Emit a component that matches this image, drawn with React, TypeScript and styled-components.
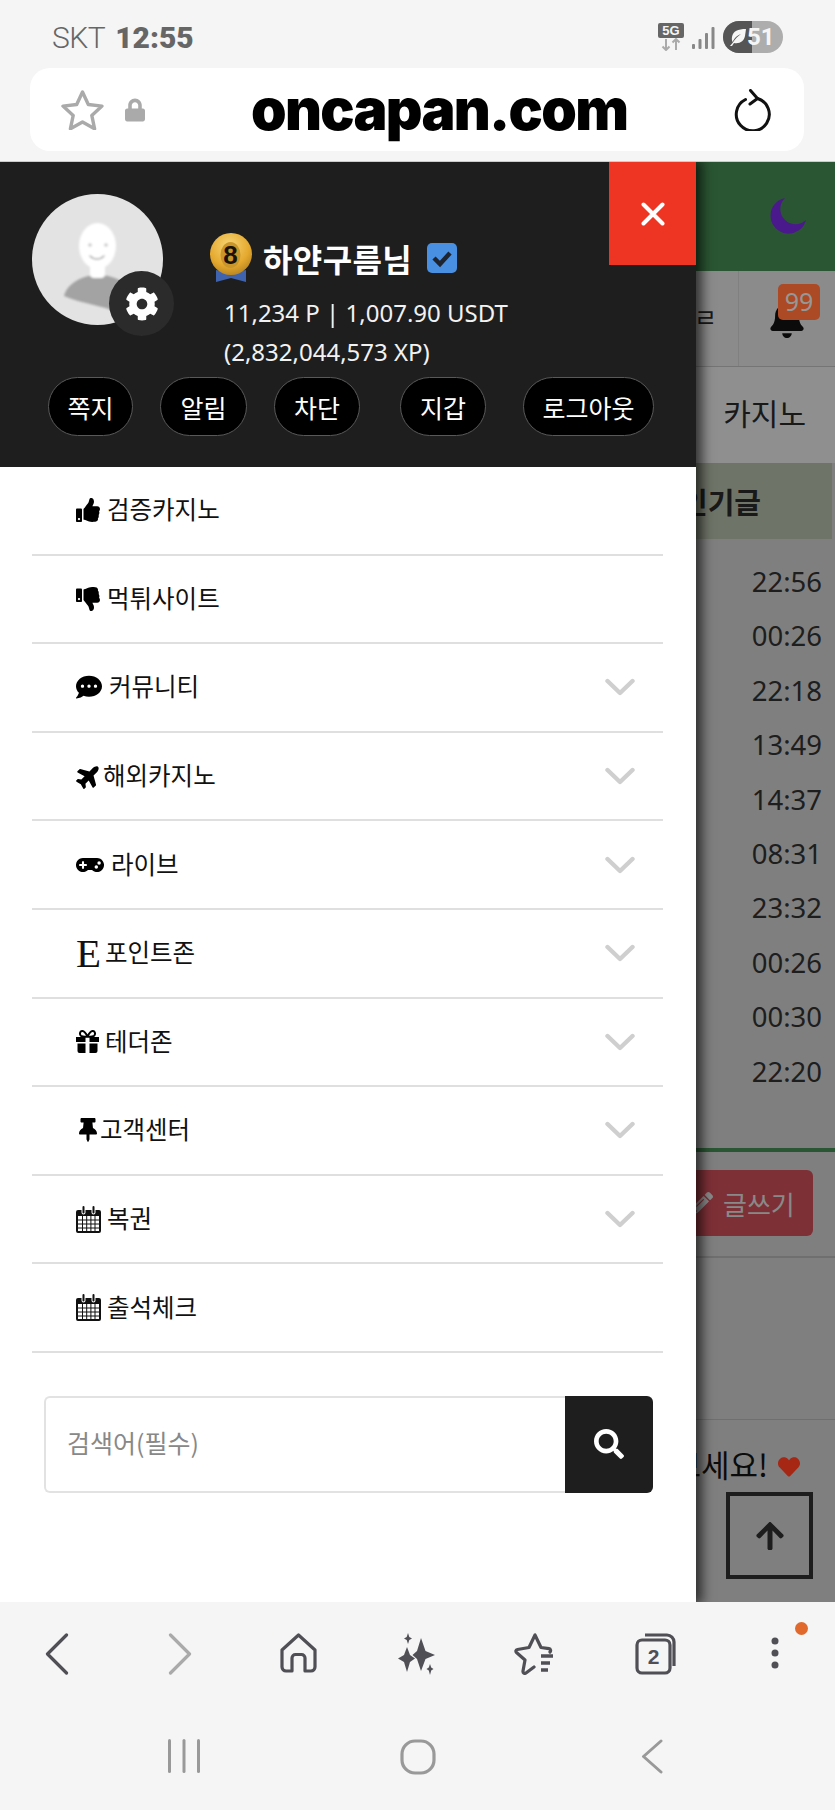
import React from 'react'
import styled, { createGlobalStyle } from 'styled-components'
import {
  FaThumbsUp,
  FaThumbsDown,
  FaCommentDots,
  FaPlane,
  FaGamepad,
  FaThumbtack,
  FaCog,
  FaSearch,
  FaBell,
  FaPencilAlt,
  FaArrowUp,
  FaHeart,
  FaLock,
} from 'react-icons/fa'

const KR = `"Noto Sans CJK KR", "Noto Sans", sans-serif`

const GlobalStyle = createGlobalStyle`
  html, body {
    margin: 0;
    padding: 0;
    background: #f5f5f5;
  }
  * {
    box-sizing: border-box;
  }
`

const Phone = styled.div`
  width: 835px;
  height: 1810px;
  display: flex;
  flex-direction: column;
  overflow: hidden;
  background: #f5f5f5;
  font-family: ${KR};
`

const StatusBar = styled.div`
  height: 68px;
  flex-shrink: 0;
  display: flex;
  align-items: flex-start;
  justify-content: space-between;
  padding: 21px 52px 0 52px;
`

const Clock = styled.div`
  font-family: Roboto, sans-serif;
  font-size: 30px;
  line-height: 34px;
  color: #666;
  font-weight: 300;
  letter-spacing: -0.5px;
  b {
    font-weight: 900;
    margin-left: 10px;
    letter-spacing: 0;
  }
`

const StatusIcons = styled.div`
  display: flex;
  align-items: flex-start;
`

const NetBadge = styled.div`
  width: 26px;
  display: flex;
  flex-direction: column;
  align-items: center;
  margin-top: 2px;
  span {
    width: 26px;
    height: 15px;
    background: #666;
    color: #f5f5f5;
    border-radius: 2px;
    font-family: "Liberation Sans", sans-serif;
    font-size: 13px;
    font-weight: 700;
    line-height: 15px;
    text-align: center;
  }
`

const SignalSlot = styled.div`
  margin: 6px 0 0 8px;
`

const Battery = styled.div`
  width: 60px;
  height: 32px;
  margin-left: 8px;
  border-radius: 16px;
  display: flex;
  overflow: hidden;
  background: #adadad;
  color: #f5f5f5;
  position: relative;
`

const BatteryFill = styled.div`
  width: 29px;
  background: #555;
  display: flex;
  align-items: center;
  justify-content: center;
`

const BatteryText = styled.div`
  position: absolute;
  left: 24px;
  top: 0;
  font-family: Roboto, sans-serif;
  font-weight: 700;
  font-size: 24px;
  line-height: 32px;
`

const UrlBar = styled.div`
  height: 83px;
  margin: 0 31px 0 30px;
  flex-shrink: 0;
  border-radius: 20px;
  background: #fff;
  display: flex;
  align-items: center;
  padding: 0 33px 0 31px;
`

const UrlText = styled.div`
  font-family: Inter, sans-serif;
  font-weight: 900;
  font-size: 57px;
  line-height: 83px;
  color: #000;
  margin-left: 106px;
  flex: 1;
  letter-spacing: -1.7px;
`

const UrlLock = styled(FaLock)`
  width: 20px;
  height: 26px;
  color: #aaa;
  margin-left: 21px;
`

const Viewport = styled.div`
  height: 1441px;
  flex-shrink: 0;
  margin-top: 10px;
  border-top: 1px solid #ccc;
  position: relative;
  overflow: hidden;
  background: #b7b7b7;
`

const GreenHeader = styled.div`
  height: 109px;
  background: #3d7b49;
  display: flex;
  justify-content: flex-end;
  padding: 35px 28px 0 0;
`

const NavRow = styled.div`
  height: 96px;
  background: #c8c8c8;
  border-bottom: 1px solid #a8a8a8;
  display: flex;
  justify-content: flex-end;
`

const NavCell = styled.div`
  width: 64px;
  font-size: 25px;
  color: #252525;
  display: flex;
  align-items: center;
  justify-content: flex-end;
  padding: 0 21px 6px 0;
`

const BellCell = styled.div`
  width: 97px;
  position: relative;
  border-left: 1px solid #b8b8b8;
  font-size: 38px;
  color: #111;
  display: flex;
  justify-content: center;
  padding-top: 29px;
`

const CountBadge = styled.div`
  position: absolute;
  left: 39px;
  top: 13px;
  width: 42px;
  height: 36px;
  border-radius: 5px;
  background: #f76a35;
  color: #d8d8d8;
  font-family: "Noto Sans", sans-serif;
  font-size: 25px;
  line-height: 35px;
  text-align: center;
`

const CategoryRow = styled.div`
  height: 96px;
  background: #cdcdcd;
  display: flex;
  justify-content: flex-end;
  align-items: center;
  padding: 0 29px 6px 0;
  font-size: 30px;
  color: #252525;
`

const HotHead = styled.div`
  height: 76px;
  margin-right: 3px;
  background: #9fa795;
  display: flex;
  align-items: center;
  padding-left: 681px;
  font-size: 29px;
  font-weight: 700;
  color: #252525;
  white-space: nowrap;
`

const TimeList = styled.div`
  background: #b7b7b7;
  margin-right: 3px;
  padding: 16px 10px 17px 0;
  font-family: "Noto Sans", sans-serif;
  font-size: 27.5px;
  line-height: 54.4px;
  text-align: right;
  color: #2c2c2c;
`

const WriteSection = styled.div`
  margin-top: 32px;
  height: 110px;
  background: #b7b7b7;
  border-top: 4px solid #3d7b49;
  border-bottom: 2px solid #a0a0a0;
  display: flex;
  justify-content: flex-end;
  padding: 18px 22px 0 0;
`

const WriteButton = styled.div`
  width: 160px;
  height: 66px;
  border-radius: 6px;
  background: #b54550;
  color: #c4c4c4;
  display: flex;
  align-items: center;
  gap: 10px;
  padding-left: 38px;
  font-size: 26px;
`

const EmptySection = styled.div`
  height: 162px;
  border-bottom: 1px solid #a0a0a0;
`

const NoticeText = styled.div`
  display: flex;
  align-items: center;
  justify-content: flex-end;
  gap: 10px;
  padding: 21px 35px 0 0;
  font-size: 31px;
  line-height: 46px;
  color: #111;
  white-space: nowrap;
  svg {
    color: #ec381d;
    width: 22px;
    height: 22px;
    margin-top: 6px;
  }
`

const TopButton = styled.div`
  position: absolute;
  left: 726px;
  top: 1330px;
  width: 87px;
  height: 87px;
  border: 4px solid #2a2a2a;
  color: #2a2a2a;
  display: flex;
  align-items: center;
  justify-content: center;
  font-size: 32px;
`

const Dim = styled.div`
  position: absolute;
  inset: 0;
  background: rgba(0, 0, 0, 0.3);
`

const Drawer = styled.aside`
  position: absolute;
  left: 0;
  top: 0;
  bottom: 0;
  width: 696px;
  background: #fff;
  box-shadow: 4px 0 11px 2px rgba(0, 0, 0, 0.65);
`

const DrawerHead = styled.div`
  height: 305px;
  background: #1e1e1e;
  position: relative;
  padding: 32px 0 0 32px;
`

const CloseButton = styled.div`
  position: absolute;
  right: 0;
  top: 0;
  width: 87px;
  height: 103px;
  background: #ee3523;
  display: flex;
  align-items: center;
  justify-content: center;
`

const Profile = styled.div`
  display: flex;
  align-items: flex-start;
`

const AvatarWrap = styled.div`
  position: relative;
  width: 131px;
  height: 131px;
  flex-shrink: 0;
`

const GearBadge = styled.div`
  position: absolute;
  left: 77px;
  top: 77px;
  width: 65px;
  height: 65px;
  border-radius: 50%;
  background: #2b2b2b;
  color: #fff;
  display: flex;
  align-items: center;
  justify-content: center;
  font-size: 34px;
`

const Info = styled.div`
  margin: 39px 0 0 46px;
`

const NameRow = styled.div`
  height: 50px;
  display: flex;
  align-items: center;
`

const Name = styled.div`
  font-size: 32px;
  line-height: 50px;
  font-weight: 700;
  color: #fff;
  margin: 0 15px 0 10px;
  letter-spacing: 0.4px;
`

const Stats = styled.div`
  margin-top: 10px;
  padding-left: 15px;
  font-family: "Noto Sans", sans-serif;
  font-size: 24px;
  line-height: 39px;
  color: #f2f2f2;
  white-space: nowrap;
`

const Pills = styled.div`
  display: flex;
  margin: 6px 0 0 16px;
`

const Pill = styled.div<{ $w: number; $ml: number }>`
  width: ${(p) => p.$w}px;
  margin-left: ${(p) => p.$ml}px;
  height: 59px;
  border-radius: 30px;
  border: 1px solid #595959;
  background: #000;
  color: #fff;
  font-size: 25px;
  display: flex;
  align-items: center;
  justify-content: center;
`

const Menu = styled.nav`
  margin: 0 33px 0 32px;
`

const Row = styled.div`
  height: 88.6px;
  border-bottom: 2px solid #dfdfdf;
  display: flex;
  align-items: center;
  padding: 0 28px 0 44px;
  color: #111;
  font-size: 24.5px;
`

const RowIcon = styled.span<{ $w: number }>`
  width: ${(p) => p.$w}px;
  display: flex;
  align-items: center;
  color: #000;
  flex-shrink: 0;
`

const SerifE = styled.span`
  font-family: "Liberation Serif", serif;
  font-size: 41px;
  line-height: 36px;
  color: #111;
`

const RowLabel = styled.span`
  flex: 1;
  padding-bottom: 3px;
`

const SearchForm = styled.div`
  display: flex;
  height: 97px;
  margin: 43px 43px 0 44px;
`

const SearchInput = styled.input`
  flex: 1;
  min-width: 0;
  border: 2px solid #e2e2e2;
  border-right: 0;
  border-radius: 6px 0 0 6px;
  padding: 0 0 4px 21px;
  font-family: ${KR};
  font-size: 25px;
  outline: none;
  &::placeholder {
    color: #888;
    opacity: 1;
  }
`

const SearchButton = styled.div`
  width: 88px;
  background: #1e1e1e;
  border-radius: 0 6px 6px 0;
  color: #fff;
  font-size: 30px;
  display: flex;
  align-items: center;
  justify-content: center;
`

const BrowserNav = styled.div`
  height: 98px;
  flex-shrink: 0;
  display: grid;
  grid-template-columns: 114px 132px 104px 134px 102px 138px 102px;
  padding-top: 31px;
`

const NavSlot = styled.div`
  display: flex;
  justify-content: center;
  align-items: flex-start;
  position: relative;
`

const OrangeDot = styled.span`
  position: absolute;
  left: 71px;
  top: -11px;
  width: 13px;
  height: 13px;
  border-radius: 50%;
  background: #e2692c;
`

const DotsSlot = styled.div`
  padding-top: 4px;
`

const SystemNav = styled.div`
  flex: 1;
  display: grid;
  grid-template-columns: repeat(3, 234px);
  padding: 39px 0 0 67px;
`

const Chevron = () => (
  <svg width="30" height="18" viewBox="0 0 30 18" fill="none">
    <path d="M2.5 3l12.5 12L27.5 3" stroke="#cfcfcf" strokeWidth="4.4" strokeLinecap="round" strokeLinejoin="round" />
  </svg>
)

const CalendarIcon = () => (
  <svg width="25" height="27" viewBox="0 0 25 27" fill="#111">
    <path d="M2 4h3.500v2.500a2 2 0 0 0 4 0V4h6v2.500a2 2 0 0 0 4 0V4H23a2 2 0 0 1 2 2v19a2 2 0 0 1-2 2H2a2 2 0 0 1-2-2V6a2 2 0 0 1 2-2zM2 10v15h21V10z" />
    <path d="M6.500 1a1 1 0 0 1 2 0v5.500a1 1 0 0 1-2 0zM16.500 1a1 1 0 0 1 2 0v5.500a1 1 0 0 1-2 0z" />
    <path d="M2 14h21M2 18h21M2 22h21M6.500 10v15M10.700 10v15M14.900 10v15M19 10v15" stroke="#111" strokeWidth="1" />
  </svg>
)

// gift with the ribbon bow on top, closer to the old font-awesome glyph than FaGift
const GiftIcon = () => (
  <svg width="23" height="23" viewBox="0 0 23 23" fill="#000">
    <path d="M0 7h9.500v5H0zM13.500 7H23v5h-9.500zM1.500 13.500h8V23h-6a2 2 0 0 1-2-2zM13.500 13.500h8V21a2 2 0 0 1-2 2h-6z" />
    <path d="M11.500 6.500C9 1.500 7.500 0.800 6 1 3.800 1.300 3.300 4.500 5 5.800c1.500 1 4 1 6.500.7zM11.500 6.500C14 1.500 15.500 0.800 17 1c2.200.3 2.700 3.500 1 4.800-1.500 1-4 1-6.500.7z" fill="none" stroke="#000" strokeWidth="2" />
  </svg>
)

const MoonShape = () => (
  <svg width="39" height="38" viewBox="0 0 39 38">
    <path d="M17 1A18 18 0 1 0 38 23 A14.500 14.500 0 0 1 17 1z" fill="#6a25c8" />
  </svg>
)

const Avatar = () => (
  <svg width="131" height="131" viewBox="0 0 131 131">
    <defs>
      <clipPath id="avatarClip">
        <circle cx="65.500" cy="65.500" r="65.500" />
      </clipPath>
      <filter id="avatarBlur">
        <feGaussianBlur stdDeviation="0.8" />
      </filter>
    </defs>
    <circle cx="65.500" cy="65.500" r="65.500" fill="#e3e3e3" />
    <g clipPath="url(#avatarClip)" filter="url(#avatarBlur)">
      <path d="M32 102c4-14 20-21 34-21s28 6 33 16l-12 22c-18-8-36-9-55-17z" fill="#a3a3a3" />
      <rect x="58" y="62" width="15" height="22" rx="4" fill="#fff" />
      <ellipse cx="65.500" cy="52" rx="18.500" ry="23" fill="#fff" />
      <circle cx="58" cy="51" r="1.800" fill="#c8c8c8" />
      <circle cx="74" cy="51" r="1.800" fill="#c8c8c8" />
      <path d="M58 62c4 4 10 4 14 0" stroke="#aaa" strokeWidth="1.500" fill="none" strokeLinecap="round" />
    </g>
  </svg>
)

const Medal = () => (
  <svg width="44" height="50" viewBox="0 0 44 50">
    <defs>
      <radialGradient id="medalGold" cx="0.45" cy="0.3" r="0.8">
        <stop offset="0" stopColor="#f7d676" />
        <stop offset="0.6" stopColor="#e5a92e" />
        <stop offset="1" stopColor="#a97a1d" />
      </radialGradient>
    </defs>
    <path d="M7 37l15 3 15-3v12l-15-4-15 4z" fill="#3f63ae" />
    <circle cx="22" cy="21" r="21" fill="url(#medalGold)" />
    <ellipse cx="21.500" cy="22" rx="10" ry="13" fill="#c9962c" />
    <text x="21.500" y="31" textAnchor="middle" fontFamily="Liberation Sans, sans-serif" fontWeight="700" fontSize="26" fill="#1a1208">8</text>
  </svg>
)

const Verified = () => (
  <svg width="30" height="30" viewBox="0 0 30 30">
    <rect width="30" height="30" rx="5" fill="#4a90e2" />
    <path d="M7 15l6 6 10-11" stroke="#1e2530" strokeWidth="4.500" fill="none" strokeLinejoin="miter" />
  </svg>
)

const StarOutline = () => (
  <svg width="43" height="40" viewBox="0 0 43 40" fill="none">
    <path d="M21.500 2l5.800 12.500 13.700 1.600-10.200 9.300 2.800 13.400-12.100-6.800-12.100 6.800 2.800-13.400L2 16.100l13.700-1.600z" stroke="#aaa" strokeWidth="3.400" strokeLinejoin="round" />
  </svg>
)

const Reload = () => (
  <svg width="38" height="42" viewBox="0 0 38 42" fill="none" stroke="#111" strokeWidth="3" strokeLinecap="round" strokeLinejoin="round">
    <path d="M12.500 10.500A16.500 16.500 0 1 0 24.500 9.500" />
    <path d="M17.500 1.500l7 8-7.500 5.500" />
  </svg>
)

const Signal = () => (
  <svg width="23" height="22" viewBox="0 0 23 22" fill="#888">
    <rect x="0" y="17" width="3" height="5" rx="1" />
    <rect x="6.500" y="12" width="3" height="10" rx="1" />
    <rect x="13" y="6" width="3" height="16" rx="1" />
    <rect x="19.500" y="0" width="3" height="22" rx="1" />
  </svg>
)

const DataArrows = () => (
  <svg width="20" height="13" viewBox="0 0 20 13" fill="none" stroke="#aaa" strokeWidth="2">
    <path d="M5 1v11M1.500 8.500L5 12l3.500-3.500M15 12V1M11.500 4.500L15 1l3.500 3.500" />
  </svg>
)

const Leaf = () => (
  <svg width="19" height="19" viewBox="0 0 19 19" fill="#f5f5f5">
    <path d="M18 1c-8 0-13 2-14 8-.4 2 0 4 .6 5C7 9 10 7 13 6c-3 2-6 5-8.500 9L2 18h2l2-3c6 1 10-2 11-7 .4-2 .7-5 1-7z" />
  </svg>
)

const BackArrow = () => (
  <svg width="24" height="42" viewBox="0 0 24 42" fill="none">
    <path d="M21.500 2L2.500 21l19 19" stroke="#4f4f55" strokeWidth="3.200" strokeLinecap="round" strokeLinejoin="round" />
  </svg>
)

const ForwardArrow = () => (
  <svg width="24" height="42" viewBox="0 0 24 42" fill="none">
    <path d="M2.500 2l19 19-19 19" stroke="#aaa" strokeWidth="3.200" strokeLinecap="round" strokeLinejoin="round" />
  </svg>
)

const SystemBack = () => (
  <svg width="22" height="35" viewBox="0 0 22 35" fill="none">
    <path d="M20 2L2.500 17.500 20 33" stroke="#999" strokeWidth="3" strokeLinecap="round" strokeLinejoin="round" />
  </svg>
)

const HomeIcon = () => (
  <svg width="37" height="40" viewBox="0 0 37 40" fill="none" stroke="#4f4f55" strokeWidth="3.200" strokeLinejoin="round">
    <path d="M18.500 2L35 17v17a4 4 0 0 1-4 4h-6V25a3.500 3.500 0 0 0-3.500-3.500h-6A3.500 3.500 0 0 0 12 25v13H6a4 4 0 0 1-4-4V17z" />
  </svg>
)

const SparkleIcon = () => (
  <svg width="40" height="42" viewBox="0 0 40 42" fill="#4f4f55">
    <path d="M24 5l4.500 13 9.500 4-9.500 4L24 38l-4-12-4.500-4 4.500-4z" />
    <path d="M10 14l3 8 5 3.500-5 3.500-3 10-3-10-6-3.500L7 22z" />
    <path d="M11 0l1.300 4 2.700 1.500-2.700 1.500L11 11 9.700 7 7 5.500 9.700 4z" />
    <path d="M33 31l1.200 3.500 2.300 1.500-2.300 1.500L33 42l-1.200-4.500L29.500 36l2.300-1.500z" />
  </svg>
)

const StarListIcon = () => (
  <svg width="42" height="42" viewBox="0 0 42 42" fill="none" stroke="#4f4f55" strokeWidth="3.200" strokeLinecap="round" strokeLinejoin="round">
    <path d="M36 19c1-1 .8-3-1-3.300L27 14.500 21 2l-6 12.500-11.500 2c-1.800.3-2 2-1 3L11 27l-2 11c-.3 2 1.500 3 3 2l8-6" />
    <path d="M27 23h12M27 30h9M27 37h7" strokeLinecap="butt" strokeWidth="3.600" />
  </svg>
)

const TabsIcon = () => (
  <svg width="41" height="42" viewBox="0 0 41 42" fill="none" stroke="#4f4f55" strokeWidth="3.200">
    <rect x="2" y="7" width="33" height="33" rx="5" />
    <path d="M10 2h22a7 7 0 0 1 7 7v24" />
    <text x="18.500" y="31" textAnchor="middle" fontFamily="Liberation Sans, sans-serif" fontWeight="700" fontSize="21" fill="#4f4f55" stroke="none">2</text>
  </svg>
)

const DotsIcon = () => (
  <svg width="8" height="32" viewBox="0 0 8 32" fill="#4f4f55">
    <circle cx="4" cy="4" r="3.500" />
    <circle cx="4" cy="16" r="3.500" />
    <circle cx="4" cy="28" r="3.500" />
  </svg>
)

const RecentsIcon = () => (
  <svg width="32" height="34" viewBox="0 0 32 34" fill="#999">
    <rect x="0" y="0" width="3" height="34" rx="1.500" />
    <rect x="14.500" y="0" width="3" height="34" rx="1.500" />
    <rect x="29" y="0" width="3" height="34" rx="1.500" />
  </svg>
)

const HomeSquareIcon = () => (
  <svg width="36" height="36" viewBox="0 0 36 36" fill="none">
    <rect x="2" y="2" width="32" height="32" rx="13" stroke="#999" strokeWidth="3.200" />
  </svg>
)

const CloseIcon = () => (
  <svg width="24" height="24" viewBox="0 0 24 24" fill="none">
    <path d="M2.500 2.500l19 19M21.500 2.500l-19 19" stroke="#fff" strokeWidth="4" strokeLinecap="round" />
  </svg>
)

const PlaneIcon = styled(FaPlane)`
  transform: rotate(-45deg);
`

const TIMES = ['22:56', '00:26', '22:18', '13:49', '14:37', '08:31', '23:32', '00:26', '00:30', '22:20']

const PILLS = [
  { label: '쪽지', w: 85, ml: 0 },
  { label: '알림', w: 87, ml: 27 },
  { label: '차단', w: 86, ml: 27 },
  { label: '지갑', w: 86, ml: 40 },
  { label: '로그아웃', w: 131, ml: 37 },
]

const MENU = [
  { label: '검증카지노', icon: <FaThumbsUp size={24} />, w: 31, more: false },
  { label: '먹튀사이트', icon: <FaThumbsDown size={24} />, w: 31, more: false },
  { label: '커뮤니티', icon: <FaCommentDots size={26} />, w: 33, more: true },
  { label: '해외카지노', icon: <PlaneIcon size={26} />, w: 27, more: true },
  { label: '라이브', icon: <FaGamepad size={28} />, w: 35, more: true },
  { label: '포인트존', icon: <SerifE>E</SerifE>, w: 29, more: true },
  { label: '테더존', icon: <GiftIcon />, w: 29, more: true },
  { label: '고객센터', icon: <FaThumbtack size={24} />, w: 24, more: true },
  { label: '복권', icon: <CalendarIcon />, w: 31, more: true },
  { label: '출석체크', icon: <CalendarIcon />, w: 31, more: false },
]

export default function App() {
  return (
    <Phone>
      <GlobalStyle />
      <StatusBar>
        <Clock>
          SKT<b>12:55</b>
        </Clock>
        <StatusIcons>
          <NetBadge>
            <span>5G</span>
            <DataArrows />
          </NetBadge>
          <SignalSlot>
            <Signal />
          </SignalSlot>
          <Battery>
            <BatteryFill>
              <Leaf />
            </BatteryFill>
            <BatteryText>51</BatteryText>
          </Battery>
        </StatusIcons>
      </StatusBar>
      <UrlBar>
        <StarOutline />
        <UrlLock />
        <UrlText>oncapan.com</UrlText>
        <Reload />
      </UrlBar>
      <Viewport>
        <GreenHeader>
          <MoonShape />
        </GreenHeader>
        <NavRow>
          <NavCell>ㄹ</NavCell>
          <BellCell>
            <FaBell />
            <CountBadge>99</CountBadge>
          </BellCell>
        </NavRow>
        <CategoryRow>카지노</CategoryRow>
        <HotHead>인기글</HotHead>
        <TimeList>
          {TIMES.map((t, i) => (
            <div key={i}>{t}</div>
          ))}
        </TimeList>
        <WriteSection>
          <WriteButton>
            <FaPencilAlt size={22} />
            글쓰기
          </WriteButton>
        </WriteSection>
        <EmptySection />
        <NoticeText>
          확인해 보세요!
          <FaHeart />
        </NoticeText>
        <TopButton>
          <FaArrowUp />
        </TopButton>
        <Dim />
        <Drawer>
          <DrawerHead>
            <CloseButton>
              <CloseIcon />
            </CloseButton>
            <Profile>
              <AvatarWrap>
                <Avatar />
                <GearBadge>
                  <FaCog />
                </GearBadge>
              </AvatarWrap>
              <Info>
                <NameRow>
                  <Medal />
                  <Name>하얀구름님</Name>
                  <Verified />
                </NameRow>
                <Stats>
                  11,234 P | 1,007.90 USDT
                  <br />
                  (2,832,044,573 XP)
                </Stats>
              </Info>
            </Profile>
            <Pills>
              {PILLS.map((p) => (
                <Pill key={p.label} $w={p.w} $ml={p.ml}>
                  {p.label}
                </Pill>
              ))}
            </Pills>
          </DrawerHead>
          <Menu>
            {MENU.map((m) => (
              <Row key={m.label}>
                <RowIcon $w={m.w}>{m.icon}</RowIcon>
                <RowLabel>{m.label}</RowLabel>
                {m.more && <Chevron />}
              </Row>
            ))}
          </Menu>
          <SearchForm>
            <SearchInput placeholder="검색어(필수)" />
            <SearchButton>
              <FaSearch />
            </SearchButton>
          </SearchForm>
        </Drawer>
      </Viewport>
      <BrowserNav>
        <NavSlot>
          <BackArrow />
        </NavSlot>
        <NavSlot>
          <ForwardArrow />
        </NavSlot>
        <NavSlot>
          <HomeIcon />
        </NavSlot>
        <NavSlot>
          <SparkleIcon />
        </NavSlot>
        <NavSlot>
          <StarListIcon />
        </NavSlot>
        <NavSlot>
          <TabsIcon />
        </NavSlot>
        <NavSlot>
          <DotsSlot>
            <DotsIcon />
          </DotsSlot>
          <OrangeDot />
        </NavSlot>
      </BrowserNav>
      <SystemNav>
        <NavSlot>
          <RecentsIcon />
        </NavSlot>
        <NavSlot>
          <HomeSquareIcon />
        </NavSlot>
        <NavSlot>
          <SystemBack />
        </NavSlot>
      </SystemNav>
    </Phone>
  )
}
